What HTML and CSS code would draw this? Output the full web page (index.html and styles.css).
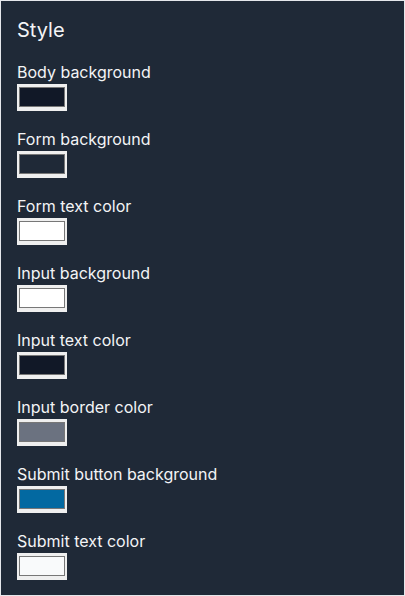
FILE: index.html
```html
<!DOCTYPE html>
<html>
<head>
<meta charset="utf-8">
<link rel="stylesheet" href="styles.css">
</head>
<body>
<div class="panel">
  <h2 class="title">Style</h2>
  <div class="field">
    <label class="label">Body background</label>
    <input class="swatch" type="color" value="#111827">
  </div>
  <div class="field">
    <label class="label">Form background</label>
    <input class="swatch" type="color" value="#1f2937">
  </div>
  <div class="field">
    <label class="label">Form text color</label>
    <input class="swatch" type="color" value="#ffffff">
  </div>
  <div class="field">
    <label class="label">Input background</label>
    <input class="swatch" type="color" value="#ffffff">
  </div>
  <div class="field">
    <label class="label">Input text color</label>
    <input class="swatch" type="color" value="#111827">
  </div>
  <div class="field">
    <label class="label">Input border color</label>
    <input class="swatch" type="color" value="#6b7280">
  </div>
  <div class="field">
    <label class="label">Submit button background</label>
    <input class="swatch" type="color" value="#0369a1">
  </div>
  <div class="field">
    <label class="label">Submit text color</label>
    <input class="swatch" type="color" value="#f9fafb">
  </div>
</div>
</body>
</html>
```
FILE: styles.css
```css
html, body {
  margin: 0;
  padding: 0;
}
body {
  background: #e5e7eb;
  padding: 1px 1px 0 1px;
  height: 596px;
  box-sizing: border-box;
  font-family: Inter, "Noto Sans", sans-serif;
}
.panel {
  background: #1f2937;
  color: #f3f4f6;
  padding: 15px 16px 16px;
  height: 594px;
  box-sizing: border-box;
  display: flex;
  flex-direction: column;
  gap: 16px;
}
.title {
  margin: 0;
  font-size: 20px;
  line-height: 28px;
  font-weight: 400;
}
.field {
  display: flex;
  flex-direction: column;
  align-items: flex-start;
}
.label {
  font-size: 16px;
  line-height: 24px;
}
.swatch {
  -webkit-appearance: none;
  appearance: none;
  margin: 0;
  width: 50px;
  height: 27px;
  box-sizing: border-box;
  border: none;
  border-radius: 0;
  padding: 3px 2px 4px;
  background: #efefef;
  cursor: pointer;
}
.swatch::-webkit-color-swatch-wrapper {
  padding: 0;
}
.swatch::-webkit-color-swatch {
  border: 1px solid #777777;
  border-radius: 0;
}
```
